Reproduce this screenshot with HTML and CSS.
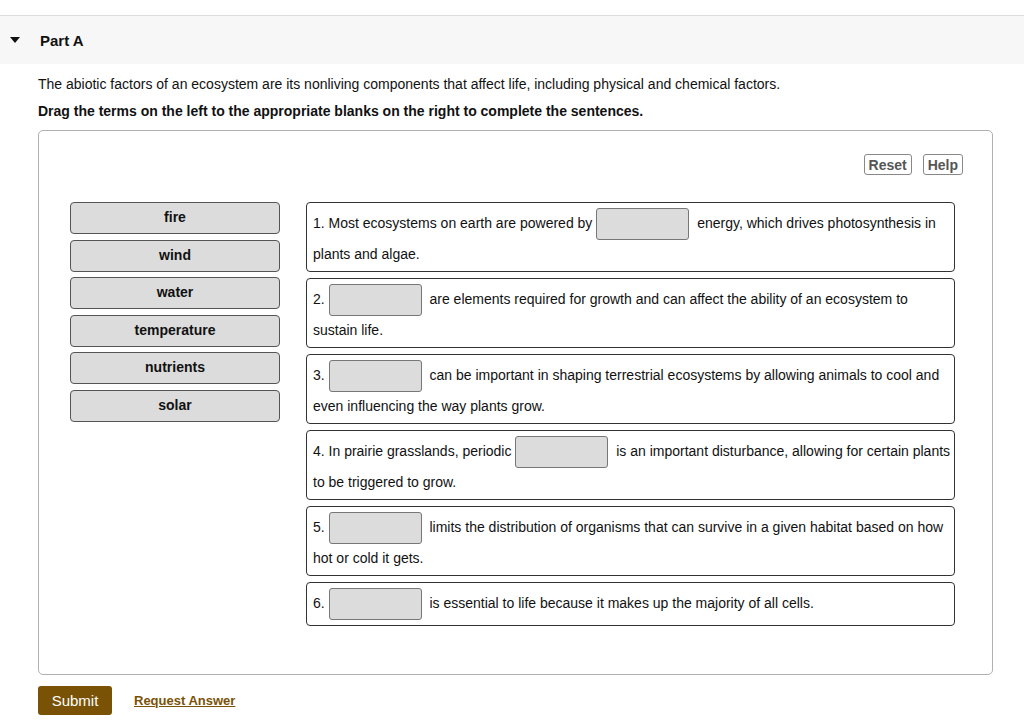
FILE: index.html
```html
<!DOCTYPE html>
<html lang="en">
<head>
    <meta charset="UTF-8">
    <meta name="viewport" content="width=device-width, initial-scale=1.0">
    <title>Part A</title>
    <link rel="stylesheet" href="styles.css">
</head>
<body>

    <div class="part-header">
        <span class="caret"></span>
        <span class="part-title">Part A</span>
    </div>

    <div class="part-body">
        <p class="intro">The abiotic factors of an ecosystem are its nonliving components that affect life, including physical and chemical factors.</p>
        <p class="instructions">Drag the terms on the left to the appropriate blanks on the right to complete the sentences.</p>

        <div class="widget">
            <div class="toolbar">
                <button class="tool-btn">Reset</button>
                <button class="tool-btn">Help</button>
            </div>

            <div class="drag-area">
                <div class="terms">
                    <div class="term">fire</div>
                    <div class="term">wind</div>
                    <div class="term">water</div>
                    <div class="term">temperature</div>
                    <div class="term">nutrients</div>
                    <div class="term">solar</div>
                </div>

                <div class="sentences">
                    <div class="sentence">1. Most ecosystems on earth are powered by <span class="blank"></span> energy, which drives photosynthesis in plants and algae.</div>
                    <div class="sentence">2. <span class="blank"></span> are elements required for growth and can affect the ability of an ecosystem to sustain life.</div>
                    <div class="sentence">3. <span class="blank"></span> can be important in shaping terrestrial ecosystems by allowing animals to cool and even influencing the way plants grow.</div>
                    <div class="sentence">4. In prairie grasslands, periodic <span class="blank"></span> is an important disturbance, allowing for certain plants to be triggered to grow.</div>
                    <div class="sentence">5. <span class="blank"></span> limits the distribution of organisms that can survive in a given habitat based on how hot or cold it gets.</div>
                    <div class="sentence">6. <span class="blank"></span> is essential to life because it makes up the majority of all cells.</div>
                </div>
            </div>
        </div>

        <div class="actions">
            <button class="submit-btn">Submit</button>
            <a href="#" class="request-link">Request Answer</a>
        </div>
    </div>

</body>
</html>
```

FILE: styles.css
```css
body {
    margin: 0;
    padding-top: 15px;
    font-family: "Liberation Sans", Arial, sans-serif;
    color: #111;
    background: white;
}
.part-header {
    display: flex;
    align-items: center;
    height: 48px;
    background: #f7f7f7;
    border-top: 1px solid #dcdcdc;
}
.caret {
    width: 0;
    height: 0;
    margin-left: 10px;
    margin-right: 20px;
    border-left: 5px solid transparent;
    border-right: 5px solid transparent;
    border-top: 6px solid #111;
}
.part-title {
    font-weight: bold;
    font-size: 15px;
}
.part-body {
    padding: 0 31px 0 38px;
}
.intro {
    margin: 12px 0 0;
    font-size: 14px;
    line-height: 17px;
}
.instructions {
    margin: 10px 0 0;
    font-size: 14px;
    font-weight: bold;
    line-height: 17px;
}
.widget {
    box-sizing: border-box;
    margin-top: 10px;
    height: 545px;
    border: 1px solid #b0b0b0;
    border-radius: 5px;
    padding: 23px 29px 0 31px;
}
.toolbar {
    display: flex;
    justify-content: flex-end;
    gap: 11px;
}
.tool-btn {
    font-family: inherit;
    font-size: 14px;
    font-weight: bold;
    color: #555;
    background: white;
    border: 1px solid #888;
    border-radius: 3px;
    padding: 0 4px;
    height: 21px;
}
.drag-area {
    display: flex;
    gap: 26px;
    margin-top: 27px;
}
.terms {
    display: flex;
    flex-direction: column;
    gap: 5.5px;
    width: 210px;
}
.term {
    height: 32px;
    line-height: 29px;
    text-align: center;
    font-size: 14px;
    font-weight: bold;
    background: #dcdcdc;
    border: 1px solid #555;
    border-radius: 4px;
    box-sizing: border-box;
}
.sentences {
    display: flex;
    flex-direction: column;
    gap: 6px;
    width: 649px;
}
.sentence {
    font-size: 14px;
    line-height: 28px;
    border: 1px solid #333;
    border-radius: 4px;
    padding: 5px 2px 3px 6px;
}
.sentence:last-child {
    padding-bottom: 5px;
}
.blank {
    display: inline-block;
    box-sizing: border-box;
    width: 93px;
    height: 32px;
    margin: 0 4px 0 0;
    vertical-align: middle;
    background: #dcdcdc;
    border: 1px solid #777;
    border-radius: 3px;
}
.actions {
    display: flex;
    align-items: center;
    gap: 22px;
    margin-top: 11px;
}
.submit-btn {
    font-family: inherit;
    font-size: 15px;
    color: white;
    background: #7a5206;
    border: none;
    border-radius: 3px;
    width: 74px;
    height: 29px;
}
.request-link {
    font-size: 13px;
    font-weight: bold;
    color: #7a5206;
    text-decoration: underline;
}
```
